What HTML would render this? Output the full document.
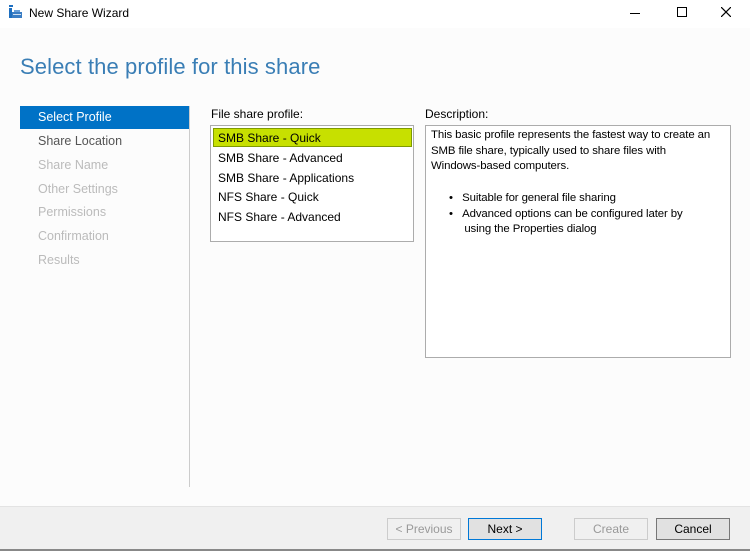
<!DOCTYPE html>
<html><head><style>
*{margin:0;padding:0;box-sizing:border-box}
body{width:750px;height:551px;background:#fcfcfc;font-family:"Liberation Sans",sans-serif;font-size:12px;color:#000;position:relative;overflow:hidden}
.tb{position:absolute;left:0;top:0;width:750px;height:28px;background:#fff}
.abs{position:absolute;white-space:nowrap}
.nav{font-size:12.5px;color:#bbb}
.btn{position:absolute;top:518px;height:22px;border:1px solid #adadad;background:#e1e1e1;text-align:center;line-height:20px;font-size:12px}
.d{font-size:11.4px;letter-spacing:-0.1px}
</style></head><body>
<div class="tb">
<svg class="abs" style="left:9px;top:5px" width="14" height="14" viewBox="0 0 14 14"><rect x="0" y="0" width="4" height="2" fill="#1e6fc0"/><rect x="0" y="3" width="3" height="10" fill="#1e6fc0"/><rect x="3" y="7" width="10" height="6" fill="#3a7dc4"/><rect x="5" y="5" width="6" height="2" fill="#6aa0d8"/><rect x="4" y="9" width="8" height="1" fill="#cfe0f2"/></svg>
<div class="abs" style="left:29px;top:6px;font-size:12px">New Share Wizard</div>
<div class="abs" style="left:630px;top:13px;width:10px;height:1px;background:#000"></div>
<div class="abs" style="left:677px;top:7px;width:10px;height:10px;border:1px solid #000"></div>
<svg class="abs" style="left:721px;top:7px" width="10" height="10"><path d="M0 0L10 10M10 0L0 10" stroke="#000" stroke-width="1.2"/></svg>
</div>
<div class="abs" style="left:20px;top:54px;font-size:22px;color:#3a7eb5;letter-spacing:0.1px">Select the profile for this share</div>
<div class="abs" style="left:20px;top:106px;width:169px;height:23px;background:#0072c6"></div>
<div class="abs" style="left:38px;top:110px;font-size:12.5px;color:#fff">Select Profile</div>
<div class="abs nav" style="left:38px;top:134px;color:#555">Share Location</div>
<div class="abs nav" style="left:38px;top:158px">Share Name</div>
<div class="abs nav" style="left:38px;top:182px">Other Settings</div>
<div class="abs nav" style="left:38px;top:205px">Permissions</div>
<div class="abs nav" style="left:38px;top:229px">Confirmation</div>
<div class="abs nav" style="left:38px;top:253px">Results</div>
<div class="abs" style="left:189px;top:106px;width:1px;height:381px;background:#ccc"></div>
<div class="abs" style="left:211px;top:107px">File share profile:</div>
<div class="abs" style="left:210px;top:125px;width:204px;height:117px;border:1px solid #acacac;background:#fff"></div>
<div class="abs" style="left:213px;top:128px;width:199px;height:19px;background:#c7e000;border:1px solid #7f9a00"></div>
<div class="abs" style="left:218px;top:131px">SMB Share - Quick</div>
<div class="abs" style="left:218px;top:151px">SMB Share - Advanced</div>
<div class="abs" style="left:218px;top:171px">SMB Share - Applications</div>
<div class="abs" style="left:218px;top:190px">NFS Share - Quick</div>
<div class="abs" style="left:218px;top:210px">NFS Share - Advanced</div>
<div class="abs" style="left:425px;top:107px">Description:</div>
<div class="abs" style="left:425px;top:125px;width:306px;height:233px;border:1px solid #acacac;background:#fff"></div>
<div class="abs d" style="left:431px;top:128px;line-height:15.5px">This basic profile represents the fastest way to create an<br>SMB file share, typically used to share files with<br>Windows-based computers.</div>
<div class="abs d" style="left:449px;top:191px;line-height:15.5px">•&nbsp;&nbsp;&nbsp;Suitable for general file sharing<br>•&nbsp;&nbsp;&nbsp;Advanced options can be configured later by<br>&nbsp;&nbsp;&nbsp;&nbsp;&nbsp;using the Properties dialog</div>
<div class="abs" style="left:0;top:506px;width:750px;height:43px;background:#f0f0f0;border-top:1px solid #e3e3e3"></div>
<div class="abs" style="left:0;top:549px;width:750px;height:2px;background:#888"></div>
<div class="btn" style="left:387px;width:74px;background:#f0f0f0;border-color:#ccc;color:#999">&lt; Previous</div>
<div class="btn" style="left:468px;width:74px;border-color:#0078d7">Next &gt;</div>
<div class="btn" style="left:574px;width:74px;background:#f0f0f0;border-color:#ccc;color:#999">Create</div>
<div class="btn" style="left:656px;width:74px;border-color:#777">Cancel</div>
</body></html>
